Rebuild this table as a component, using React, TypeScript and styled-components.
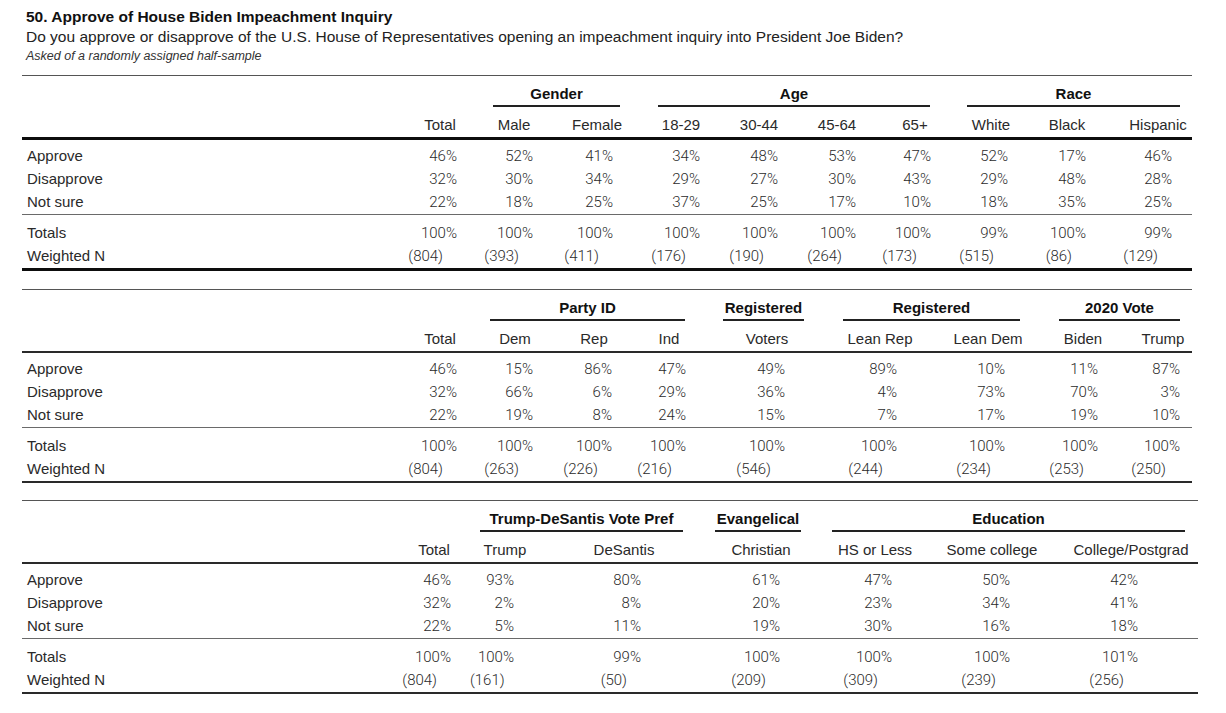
import React from "react";
import styled, { createGlobalStyle } from "styled-components";

const GlobalStyle = createGlobalStyle`
  html, body {
    margin: 0;
    padding: 0;
    background: #fff;
  }
  body {
    font-family: "Liberation Sans", Arial, Helvetica, sans-serif;
    color: #1c1c1c;
  }
`;

type Col = { name: string; w: number; pr: number; hpl?: number };
type Group = { name: string; span: number; ml: number; mr: number };
type Crosstab = {
    labelW: number;
    width: number;
    gap: number;
    rule: number;
    ruleColor: string;
    cols: Col[];
    groups: Group[];
    rows: number[][];
    totals: number[];
    ns: number[];
};

const ROW_LABELS = ["Approve", "Disapprove", "Not sure"];

const TABLES: Crosstab[] = [
    {
        labelW: 382,
        width: 1170,
        gap: 10,
        rule: 3,
        ruleColor: "#0d0d0d",
        cols: [
            { name: "Total", w: 72, pr: 19 },
            { name: "Male", w: 76, pr: 19 },
            { name: "Female", w: 90, pr: 29 },
            { name: "18-29", w: 78, pr: 20 },
            { name: "30-44", w: 78, pr: 20 },
            { name: "45-64", w: 78, pr: 20 },
            { name: "65+", w: 78, pr: 23 },
            { name: "White", w: 74, pr: 20 },
            { name: "Black", w: 78, pr: 20 },
            { name: "Hispanic", w: 86, pr: 20, hpl: 18 },
        ],
        groups: [
            { name: "Gender", span: 2, ml: 17, mr: 22 },
            { name: "Age", span: 4, ml: 16, mr: 24 },
            { name: "Race", span: 3, ml: 13, mr: 12 },
        ],
        rows: [
            [46, 52, 41, 34, 48, 53, 47, 52, 17, 46],
            [32, 30, 34, 29, 27, 30, 43, 29, 48, 28],
            [22, 18, 25, 37, 25, 17, 10, 18, 35, 25],
        ],
        totals: [100, 100, 100, 100, 100, 100, 100, 99, 100, 99],
        ns: [804, 393, 411, 176, 190, 264, 173, 515, 86, 129],
    },
    {
        labelW: 382,
        width: 1170,
        gap: 18,
        rule: 2,
        ruleColor: "#2a2a2a",
        cols: [
            { name: "Total", w: 72, pr: 19 },
            { name: "Dem", w: 78, pr: 21 },
            { name: "Rep", w: 80, pr: 22 },
            { name: "Ind", w: 70, pr: 18 },
            { name: "Voters", w: 126, pr: 45 },
            { name: "Lean Rep", w: 100, pr: 33 },
            { name: "Lean Dem", w: 116, pr: 41 },
            { name: "Biden", w: 74, pr: 22 },
            { name: "Trump", w: 72, pr: 12, hpl: 14 },
        ],
        groups: [
            { name: "Party ID", span: 3, ml: 14, mr: 19 },
            { name: "Registered", span: 1, ml: 19, mr: 26 },
            { name: "Registered", span: 2, ml: 13, mr: 26 },
            { name: "2020 Vote", span: 2, ml: 13, mr: 12 },
        ],
        rows: [
            [46, 15, 86, 47, 49, 89, 10, 11, 87],
            [32, 66, 6, 29, 36, 4, 73, 70, 3],
            [22, 19, 8, 24, 15, 7, 17, 19, 10],
        ],
        totals: [100, 100, 100, 100, 100, 100, 100, 100, 100],
        ns: [804, 263, 226, 216, 546, 244, 234, 253, 250],
    },
    {
        labelW: 376,
        width: 1176,
        gap: 17,
        rule: 2,
        ruleColor: "#2a2a2a",
        cols: [
            { name: "Total", w: 72, pr: 19 },
            { name: "Trump", w: 70, pr: 26 },
            { name: "DeSantis", w: 168, pr: 67 },
            { name: "Christian", w: 106, pr: 34 },
            { name: "HS or Less", w: 122, pr: 44 },
            { name: "Some college", w: 112, pr: 38 },
            { name: "College/Postgrad", w: 150, pr: 60, hpl: 16 },
        ],
        groups: [
            { name: "Trump-DeSantis Vote Pref", span: 2, ml: 10, mr: 25 },
            { name: "Evangelical", span: 1, ml: 7, mr: 13 },
            { name: "Education", span: 3, ml: 18, mr: 13 },
        ],
        rows: [
            [46, 93, 80, 61, 47, 50, 42],
            [32, 2, 8, 20, 23, 34, 41],
            [22, 5, 11, 19, 30, 16, 18],
        ],
        totals: [100, 100, 99, 100, 100, 100, 101],
        ns: [804, 161, 50, 209, 309, 239, 256],
    },
];

const Page = styled.main`
    width: 1226px;
    box-sizing: border-box;
    padding: 7px 0 0 22px;
`;

const Intro = styled.header`
    padding-left: 4px;
    margin-bottom: 10px;
`;

const Title = styled.h1`
    margin: 0;
    font-size: 15.5px;
    line-height: 20px;
    font-weight: 700;
    color: #111;
`;

const Question = styled.p`
    margin: 0;
    font-size: 15.5px;
    line-height: 20px;
    color: #222;
`;

const Note = styled.p`
    margin: 0;
    font-size: 12.5px;
    line-height: 18px;
    font-style: italic;
    color: #333;
`;

const Table = styled.section<{ $w: number; $gap: number }>`
    width: ${p => p.$w}px;
    margin-top: ${p => p.$gap}px;
    border-top: 1px solid #555;
    &:first-of-type {
        margin-top: 0;
    }
`;

const Grid = styled.div<{ $cols: string }>`
    display: grid;
    grid-template-columns: ${p => p.$cols};
    font-size: 15px;
    line-height: 23px;
`;

const Head = styled(Grid)<{ $rule: number; $color: string }>`
    padding: 7px 0 1px;
    row-gap: 7px;
    line-height: 22px;
    border-bottom: ${p => p.$rule}px solid ${p => p.$color};
`;

const Body = styled(Grid)`
    padding: 4px 0 1px;
    border-bottom: 1px solid #6a6a6a;
`;

const Foot = styled(Grid)<{ $rule: number; $color: string }>`
    padding: 6px 0 1px;
    border-bottom: ${p => p.$rule}px solid ${p => p.$color};
`;

const Spacer = styled.div<{ $span: number }>`
    grid-column: span ${p => p.$span};
`;

const GroupHead = styled.div<{ $span: number; $ml: number; $mr: number }>`
    grid-column: span ${p => p.$span};
    margin: 0 ${p => p.$mr}px 0 ${p => p.$ml}px;
    border-bottom: 2px solid #222;
    text-align: center;
    font-weight: 700;
    color: #111;
    white-space: nowrap;
`;

const ColHead = styled.div<{ $pl: number }>`
    padding-left: ${p => p.$pl}px;
    text-align: center;
    white-space: nowrap;
    color: #2a2a2a;
`;

const Label = styled.div`
    padding-left: 5px;
    color: #2a2a2a;
`;

const Value = styled.div<{ $pr: number }>`
    padding: 2px ${p => p.$pr}px 0 0;
    line-height: 21px;
    text-align: right;
    font-family: Roboto, "Liberation Sans", Arial, sans-serif;
    font-weight: 300;
    color: #2b2b2b;
    white-space: nowrap;
`;

const pct = (v: number) => `${v}%`;

const CrosstabTable: React.FC<{ t: Crosstab }> = ({ t }) => {
    const cols = [t.labelW, ...t.cols.map(c => c.w)].map(w => `${w}px`).join(" ");
    return (
        <Table $w={t.width} $gap={t.gap}>
            <Head $cols={cols} $rule={t.rule} $color={t.ruleColor}>
                <Spacer $span={2} />
                {t.groups.map((g, i) => (
                    <GroupHead key={i} $span={g.span} $ml={g.ml} $mr={g.mr}>
                        {g.name}
                    </GroupHead>
                ))}
                <div />
                {t.cols.map(c => (
                    <ColHead key={c.name} $pl={c.hpl ?? 0}>
                        {c.name}
                    </ColHead>
                ))}
            </Head>
            <Body $cols={cols}>
                {t.rows.map((row, r) => (
                    <React.Fragment key={r}>
                        <Label>{ROW_LABELS[r]}</Label>
                        {row.map((v, i) => (
                            <Value key={i} $pr={t.cols[i].pr}>
                                {pct(v)}
                            </Value>
                        ))}
                    </React.Fragment>
                ))}
            </Body>
            <Foot $cols={cols} $rule={t.rule} $color={t.ruleColor}>
                <Label>Totals</Label>
                {t.totals.map((v, i) => (
                    <Value key={i} $pr={t.cols[i].pr}>
                        {pct(v)}
                    </Value>
                ))}
                <Label>Weighted N</Label>
                {t.ns.map((v, i) => (
                    <Value key={i} $pr={t.cols[i].pr + 14}>
                        ({v})
                    </Value>
                ))}
            </Foot>
        </Table>
    );
};

const App = () => {
    return (
        <Page>
            <GlobalStyle />
            <Intro>
                <Title>50. Approve of House Biden Impeachment Inquiry</Title>
                <Question>
                    Do you approve or disapprove of the U.S. House of
                    Representatives opening an impeachment inquiry into
                    President Joe Biden?
                </Question>
                <Note>Asked of a randomly assigned half-sample</Note>
            </Intro>
            {TABLES.map((t, i) => (
                <CrosstabTable key={i} t={t} />
            ))}
        </Page>
    );
};

export default App;
